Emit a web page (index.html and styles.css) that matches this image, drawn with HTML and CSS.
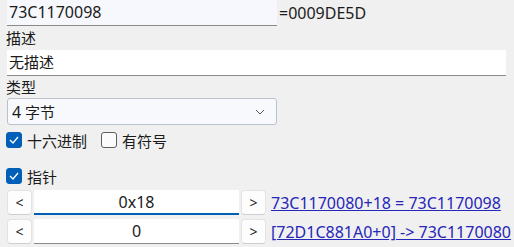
FILE: index.html
```html
<!DOCTYPE html>
<html lang="zh-CN">
<head>
    <meta charset="UTF-8">
    <meta name="viewport" content="width=device-width, initial-scale=1.0">
    <title>地址编辑</title>
    <link rel="stylesheet" href="styles.css">
</head>
<body>
    <div class="panel">
        <div class="addr-row">
            <div class="field addr">73C1170098</div>
            <span class="offset">=0009DE5D</span>
        </div>
        <div class="label">描述</div>
        <div class="field desc">无描述</div>
        <div class="label short">类型</div>
        <div class="select">
            <span><span class="latin">4</span> 字节</span>
            <svg class="chevron" width="10" height="6" viewBox="0 0 10 6"><path d="M1 1 L5 5 L9 1" fill="none" stroke="#555" stroke-width="1"/></svg>
        </div>
        <div class="checks">
            <label class="check"><span class="box on"><svg width="10" height="8" viewBox="0 0 10 8"><path d="M1 4 L4 7 L9 1" fill="none" stroke="#fff" stroke-width="1.3"/></svg></span>十六进制</label>
            <label class="check"><span class="box"></span>有符号</label>
        </div>
        <div class="checks ptr">
            <label class="check"><span class="box on"><svg width="10" height="8" viewBox="0 0 10 8"><path d="M1 4 L4 7 L9 1" fill="none" stroke="#fff" stroke-width="1.3"/></svg></span>指针</label>
        </div>
        <div class="step">
            <button class="btn">&lt;</button>
            <div class="num focus">0x18</div>
            <button class="btn">&gt;</button>
            <a class="link" href="#">73C1170080+18 = 73C1170098</a>
        </div>
        <div class="step">
            <button class="btn">&lt;</button>
            <div class="num">0</div>
            <button class="btn">&gt;</button>
            <a class="link" href="#">[72D1C881A0+0] -&gt; 73C1170080</a>
        </div>
    </div>
</body>
</html>
```

FILE: styles.css
```css
body {
    margin: 0;
    background: #f0f0f0;
    font-family: "Noto Sans", "Noto Sans CJK SC", sans-serif;
    font-size: 15px;
    color: #1b1b1b;
}
.panel {
    padding: 0 7px;
}
.latin, .addr, .offset, .num, .link {
    font-size: 16px;
}
.addr-row {
    display: flex;
    align-items: center;
    height: 26px;
}
.field {
    box-sizing: border-box;
    height: 26px;
    line-height: 24px;
    padding: 0 2px;
    background: #fff;
    border-bottom: 1px solid #8a8a8a;
}
.addr {
    width: 270px;
    background: #f6f8fd;
}
.offset {
    margin-left: 2px;
}
.desc {
    width: 499px;
}
.label {
    height: 24px;
    line-height: 24px;
    margin-left: -1px;
}
.label.short {
    height: 22px;
    line-height: 22px;
}
.select {
    box-sizing: border-box;
    width: 270px;
    height: 27px;
    padding: 0 11px 0 4px;
    display: flex;
    align-items: center;
    justify-content: space-between;
    background: #f8f9fd;
    border: 1px solid #b9c2cc;
    border-radius: 3px;
}
.checks {
    display: flex;
    gap: 15px;
    margin-top: 7px;
    height: 16px;
    align-items: center;
}
.ptr {
    margin-top: 20px;
}
.check {
    display: flex;
    align-items: center;
    gap: 5px;
    margin-left: -1px;
}
.box {
    box-sizing: border-box;
    width: 16px;
    height: 16px;
    border: 1px solid #5e5e5e;
    border-radius: 3px;
    background: #fbfbfb;
    display: flex;
    align-items: center;
    justify-content: center;
}
.box.on {
    background: #005fb8;
    border-color: #005fb8;
}
.step {
    display: flex;
    align-items: center;
    height: 25px;
    margin-top: 6px;
}
.step + .step {
    margin-top: 4px;
}
.btn {
    box-sizing: border-box;
    flex: none;
    width: 25px;
    height: 25px;
    padding: 0;
    font: inherit;
    font-size: 14px;
    color: #1b1b1b;
    background: #fdfdfd;
    border: 1px solid #e3e3e3;
    border-bottom-color: #cfcfcf;
    border-radius: 4px;
}
.num {
    box-sizing: border-box;
    flex: none;
    width: 205px;
    height: 25px;
    margin: 0 2px;
    line-height: 24px;
    text-align: center;
    background: #fff;
    border-bottom: 1px solid #8a8a8a;
}
.num.focus {
    border-bottom: 2px solid #005fb8;
}
.link {
    flex: none;
    margin-left: 5px;
    white-space: nowrap;
    color: #2626b8;
}
```
